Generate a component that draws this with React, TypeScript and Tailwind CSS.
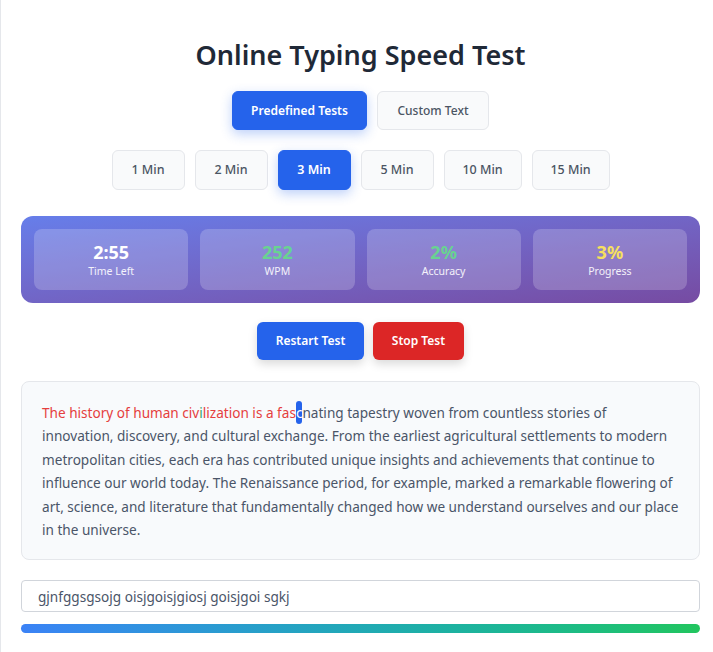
import { useState } from 'react';

const durations = ['1 Min', '2 Min', '3 Min', '5 Min', '10 Min', '15 Min'];

const stats = [
  { value: '2:55', label: 'Time Left', color: 'text-white' },
  { value: '252', label: 'WPM', color: 'text-[#68d391]' },
  { value: '2%', label: 'Accuracy', color: 'text-[#68d391]' },
  { value: '3%', label: 'Progress', color: 'text-[#f6e05e]' },
];

const rest =
  'nating tapestry woven from countless stories of innovation, discovery, and cultural exchange. From the earliest agricultural settlements to modern metropolitan cities, each era has contributed unique insights and achievements that continue to influence our world today. The Renaissance period, for example, marked a remarkable flowering of art, science, and literature that fundamentally changed how we understand ourselves and our place in the universe.';

export default function App() {
  const [mode, setMode] = useState('predefined');
  const [duration, setDuration] = useState('3 Min');
  const [input, setInput] = useState('gjnfggsgsojg oisjgoisjgiosj goisjgoi sgkj');

  return (
    <div className="min-h-screen bg-[#e5e7eb] pl-px font-['Noto_Sans',sans-serif]">
      <div className="min-h-screen bg-white pl-5 pr-[13px] pt-[41px] pb-5">
        <h1 className="text-center text-[27px] font-semibold leading-none text-[#1f2937]">Online Typing Speed Test</h1>

        <div className="mt-[23px] flex justify-center gap-[10px]">
          {[
            { value: 'predefined', label: 'Predefined Tests', w: 'w-[135px]' },
            { value: 'custom', label: 'Custom Text', w: 'w-[112px]' },
          ].map(({ value, label, w }) => (
            <button
              key={value}
              onClick={() => setMode(value)}
              className={`${w} h-[39px] rounded-md border text-[12px] font-medium ${
                mode === value
                  ? 'border-[#2563eb] bg-[#2563eb] font-semibold text-white shadow-[0_4px_12px_rgba(37,99,235,0.3)]'
                  : 'border-[#e5e7eb] bg-[#f9fafb] text-[#4b5563]'
              }`}
            >
              {label}
            </button>
          ))}
        </div>

        <div className="mt-[20px] flex justify-center gap-[10px]">
          {durations.map((d) => (
            <button
              key={d}
              onClick={() => setDuration(d)}
              className={`h-[40px] rounded-md border text-[12.5px] font-medium ${
                d.length > 5 ? 'w-[78px]' : 'w-[73px]'
              } ${
                duration === d
                  ? 'border-[#2563eb] bg-[#2563eb] font-semibold text-white shadow-[0_4px_12px_rgba(37,99,235,0.3)]'
                  : 'border-[#e5e7eb] bg-[#f9fafb] text-[#4b5563]'
              }`}
            >
              {d}
            </button>
          ))}
        </div>

        <div className="mt-[26px] grid grid-cols-4 gap-3 rounded-xl bg-gradient-to-br from-[#667eea] to-[#764ba2] p-[13px]">
          {stats.map((s) => (
            <div key={s.label} className="flex h-[61px] flex-col items-center justify-center rounded-lg bg-white/20">
              <div className={`text-[18px] font-bold leading-[22px] ${s.color}`}>{s.value}</div>
              <div className="text-[10.5px] leading-[16px] text-white/90">{s.label}</div>
            </div>
          ))}
        </div>

        <div className="mt-[19px] flex justify-center gap-[9px]">
          <button className="h-[38px] w-[107px] rounded-md bg-[#2563eb] text-[12px] font-semibold text-white shadow-[0_4px_10px_rgba(0,0,0,0.15)]">
            Restart Test
          </button>
          <button className="h-[38px] w-[91px] rounded-md bg-[#dc2626] text-[12px] font-semibold text-white shadow-[0_4px_10px_rgba(0,0,0,0.15)]">
            Stop Test
          </button>
        </div>

        <div className="mt-[21px] rounded-lg border border-[#e5e7eb] bg-[#f8fafc] px-5 pt-[19px] pb-[18px] text-[13.6px] leading-[23.4px] text-[#4a5568]">
          <span className="text-[#e53e3e]">The history of human civ</span>
          <span className="text-[#38a169]">i</span>
          <span className="text-[#e53e3e]">lization is a fas</span>
          <span className="rounded-[3px] bg-[#2563eb] py-[2px] text-white">c</span>
          <span>{rest}</span>
        </div>

        <input
          value={input}
          onChange={(e) => setInput(e.target.value)}
          className="mt-5 block h-[32px] w-full rounded border border-[#d1d5db] bg-white px-4 text-[13.6px] text-[#4a5568] outline-none"
        />

        <div className="mt-3 h-[9px] w-full rounded-full bg-gradient-to-r from-[#3b82f6] to-[#22c55e]" />
      </div>
    </div>
  );
}
